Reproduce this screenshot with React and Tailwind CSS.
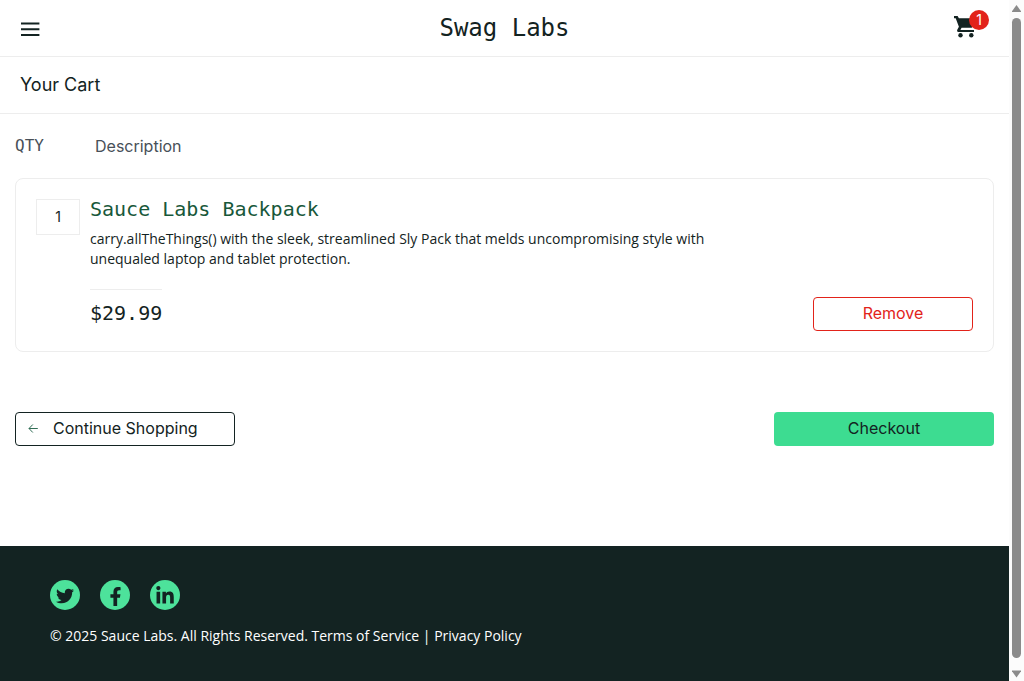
import { FaFacebookF, FaLinkedinIn, FaTwitter } from "react-icons/fa";

const sans = "font-['Inter','Open_Sans',sans-serif]";
const body = "font-['Open_Sans',sans-serif]";
const mono = "font-['DejaVu_Sans_Mono','Liberation_Mono',monospace]";

function MenuIcon() {
  return (
    <svg viewBox="0 0 20 16" className="h-4 w-5" fill="none" stroke="#132322" strokeWidth="2" aria-hidden="true">
      <path d="M1 2.5h18.4M1 8.3h18.4M1 14.1h18.4" />
    </svg>
  );
}

function CartIcon() {
  return (
    <svg viewBox="0 0 24 24" className="size-6" fill="#132322" aria-hidden="true">
      <path d="M0 1h3.6l1.3 2.2H22l-4.2 9.6H7.6l-1.2 2.1H20v2.2H4.9c-1.6 0-2.3-1.4-1.5-2.7l1.5-2.6L1.7 3.2H0z" />
      <circle cx="6.5" cy="20.2" r="2.2" />
      <circle cx="17.3" cy="20.2" r="2.2" />
    </svg>
  );
}

function ArrowLeftIcon() {
  return (
    <svg viewBox="0 0 10 10" className="size-[10px]" fill="none" stroke="#1b5e43" strokeWidth="0.9" aria-hidden="true">
      <path d="M9.8 5.5H1.1M4.8 1.5 1 5.5l3.8 4" />
    </svg>
  );
}

const socials = [
  { label: "Twitter", Icon: FaTwitter, size: "size-[18px]" },
  { label: "Facebook", Icon: FaFacebookF, size: "size-[19px]" },
  { label: "LinkedIn", Icon: FaLinkedinIn, size: "size-5" },
];

function Header() {
  return (
    <header className="grid h-[57px] grid-cols-[1fr_auto_1fr] items-center border-b border-[#ededed] px-5">
      <button type="button" aria-label="Open Menu" className="justify-self-start pt-[2px]">
        <MenuIcon />
      </button>
      <div className={`${mono} text-2xl`}>Swag Labs</div>
      <a href="#cart" aria-label="Cart, 1 item" className="relative mr-[11px] mb-[2px] justify-self-end">
        <CartIcon />
        <span className="absolute -top-[5px] left-[15px] flex size-5 items-center justify-center rounded-full bg-[#e2231a] text-sm text-white">
          1
        </span>
      </a>
    </header>
  );
}

function CartItem() {
  return (
    <article className="flex gap-[10px] rounded-lg border border-[#ededed] p-5">
      <div className="flex h-9 w-11 shrink-0 items-center justify-center border border-[#ededed] text-sm">1</div>
      <div className="min-w-0 flex-1">
        <a href="#item" className={`${mono} block text-xl leading-5 text-[#18583a]`}>
          Sauce Labs Backpack
        </a>
        <p className={`${body} mt-[10px] max-w-[640px] text-sm leading-5`}>
          carry.allTheThings() with the sleek, streamlined Sly Pack that melds uncompromising style with unequaled
          laptop and tablet protection.
        </p>
        <div className="mt-5 flex items-start justify-between">
          <div className={`${mono} border-t border-[#ededed] pt-[11px] text-xl leading-6`}>$29.99</div>
          <button
            type="button"
            className="mt-2 h-[34px] w-40 rounded border border-[#e2231a] pb-[2px] text-base leading-5 text-[#e2231a]"
          >
            Remove
          </button>
        </div>
      </div>
    </article>
  );
}

function Footer() {
  return (
    <footer className="mt-auto bg-[#132322] px-[50px] pt-[34px] pb-[35px] text-white">
      <ul className="flex gap-5">
        {socials.map(({ label, Icon, size }) => (
          <li key={label}>
            <a
              href={`#${label.toLowerCase()}`}
              aria-label={label}
              className="flex size-[30px] items-center justify-center rounded-full bg-[#4de29b] pt-[2px] text-[#132322]"
            >
              <Icon className={size} />
            </a>
          </li>
        ))}
      </ul>
      <p className={`${body} mt-4 text-sm leading-5`}>
        © 2025 Sauce Labs. All Rights Reserved. Terms of Service | Privacy Policy
      </p>
    </footer>
  );
}

function Scrollbar() {
  return (
    <div
      aria-hidden="true"
      className="sticky top-0 flex h-screen w-[15px] flex-col items-center bg-[#fcfcfc] pt-[5px] pb-[3px]"
    >
      <svg viewBox="0 0 9 8" className="h-2 w-[9px] shrink-0" fill="#8b8b8b">
        <path d="M4.5 0 9 6.2V7H0v-.8z" />
      </svg>
      <div className="mt-[5px] mb-3 w-[9px] flex-1 rounded-full bg-[#8b8b8b]" />
      <svg viewBox="0 0 9 8" className="h-2 w-[9px] shrink-0" fill="#8b8b8b">
        <path d="M4.5 7.5 9 1.3V.5H0v.8z" />
      </svg>
    </div>
  );
}

export default function App() {
  return (
    <div className={`${sans} flex bg-white text-[#132322]`}>
      <div className="flex min-h-screen min-w-0 flex-1 flex-col">
        <Header />
        <div className="flex h-[57px] items-center border-b border-[#ededed] px-5">
          <h1 className="text-lg">Your Cart</h1>
        </div>
        <main className="px-[15px] pt-5 pb-[100px]">
          <div className="flex text-base leading-6 text-[#485058]">
            <div className={`${mono} w-20`}>QTY</div>
            <div>Description</div>
          </div>
          <div className="mt-5">
            <CartItem />
          </div>
          <div className="mt-[60px] flex justify-between">
            <button
              type="button"
              className="flex h-[34px] w-[220px] items-center gap-[15px] rounded border border-[#132322] px-3 pb-[2px] text-base"
            >
              <ArrowLeftIcon />
              Continue Shopping
            </button>
            <button type="button" className="h-[34px] w-[220px] rounded bg-[#3ddc91] pb-[2px] text-base">
              Checkout
            </button>
          </div>
        </main>
        <Footer />
      </div>
      <Scrollbar />
    </div>
  );
}
